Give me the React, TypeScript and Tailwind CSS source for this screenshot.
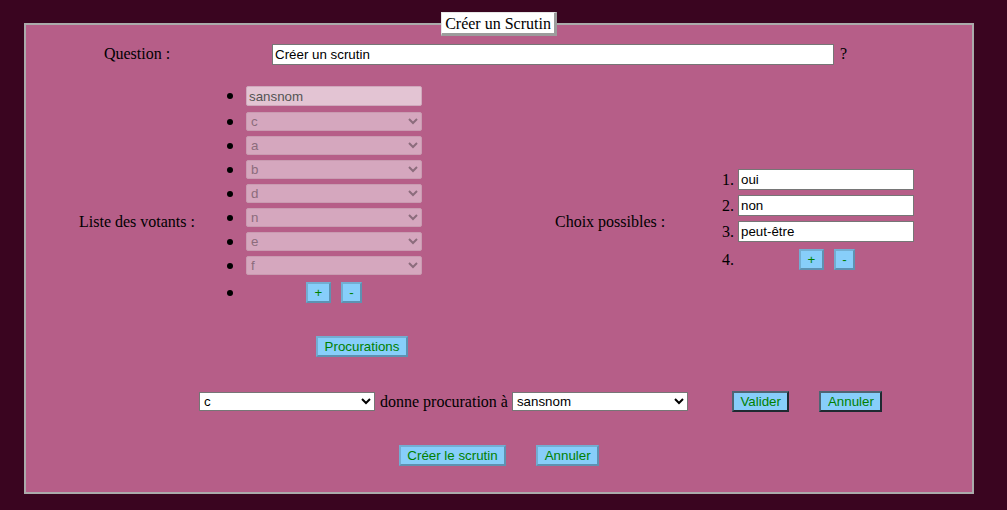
import React from 'react';

const btn =
  "h-[21px] px-[6.5px] py-0 border-2 bg-[#87cefa] text-[#008000] font-['Liberation_Sans',sans-serif] text-[13.33px] leading-[15px] border-t-[#72aed2] border-l-[#72aed2] border-r-[#5d92b2] border-b-[#5d92b2]";
const btnDark =
  "h-[21px] px-[6.5px] py-0 border-2 bg-[#87cefa] text-[#008000] font-['Liberation_Sans',sans-serif] text-[13.33px] leading-[15px] border-t-[#4d6573] border-l-[#4d6573] border-r-[#1e2a31] border-b-[#1e2a31]";

const field =
  "h-[21px] w-[176px] px-[2px] border border-[#767676] bg-white text-black font-['Liberation_Sans',sans-serif] text-[13.33px]";

const voters = ['c', 'a', 'b', 'd', 'n', 'e', 'f'];
const choices = ['oui', 'non', 'peut-être'];

function Dot() {
  return <span className="w-[6px] h-[6px] rounded-full bg-black shrink-0" />;
}

export default function App() {
  return (
    <div className="h-[510px] w-full bg-[#3a0520] pt-[12px] font-['Liberation_Serif',serif] text-[16px] text-black overflow-hidden">
      <fieldset className="ml-[24px] w-[950px] border-2 border-[#ababab] bg-[#b65e88] pb-[26px]">
        <legend className="mx-auto h-[24px] bg-white px-[3px] leading-[21px] border-t border-l border-t-[#e6e6e6] border-l-[#e6e6e6] border-r-[3px] border-b-[3px] border-r-[#9c9c9c] border-b-[#9c9c9c]">
          Créer un Scrutin
        </legend>

        {/* question */}
        <div className="mt-[6px] flex items-center">
          <div className="w-[222px] text-center">Question :</div>
          <input className="ml-[24px] h-[21px] w-[562px] px-[2px] border border-[#767676] bg-white text-black font-['Liberation_Sans',sans-serif] text-[13.33px]" defaultValue="Créer un scrutin" />
          <span className="ml-[6px]">?</span>
        </div>

        {/* votants et choix */}
        <div className="mt-[20px] flex items-center">
          <div className="w-[180px] pl-[53px] whitespace-nowrap">Liste des votants :</div>

          <div className="w-[312px] flex flex-col">
            <ul className="flex flex-col">
              <li className="flex items-center h-[20px] pl-[21px] gap-[13px]">
                <Dot />
                <input
                  disabled
                  defaultValue="sansnom"
                  className="h-[20px] w-[176px] px-[2px] rounded-[2px] border border-[#cfa9bc] bg-[#e3c4d3] text-[#545454] disabled:text-[#545454] font-['Liberation_Sans',sans-serif] text-[13.33px]"
                />
              </li>
              {voters.map((v, i) => (
                <li key={v} className={(i === 0 ? 'mt-[6px]' : 'mt-[5px]') + ' flex items-center h-[19px] pl-[21px] gap-[13px]'}>
                  <Dot />
                  <select
                    disabled
                    defaultValue={v}
                    className="h-[19px] w-[176px] rounded-[2px] border border-[#c99bb1] bg-[#d5a7be] text-[#8c6c7c] font-['Liberation_Sans',sans-serif] text-[13.33px]"
                  >
                    <option value={v}>{v}</option>
                  </select>
                </li>
              ))}
              <li className="mt-[7px] flex items-center h-[21px] pl-[21px]">
                <Dot />
                <button className={'ml-[73px] ' + btn}>+</button>
                <button className={'ml-[10px] ' + btn}>-</button>
              </li>
            </ul>
            <button className={'mt-[33px] self-center ' + btn}>Procurations</button>
          </div>

          <div className="w-[200px] pl-[37px] whitespace-nowrap">Choix possibles :</div>

          <ol className="flex flex-col pb-[4px]">
            {choices.map((c, i) => (
              <li key={c} className={(i === 0 ? '' : 'mt-[5px] ') + 'flex items-center h-[21px]'}>
                <span className="w-[16px] text-right">{i + 1}.</span>
                <input className={'ml-[4px] ' + field} defaultValue={c} />
              </li>
            ))}
            <li className="mt-[7px] flex items-center h-[21px]">
              <span className="w-[16px] text-right">4.</span>
              <button className={'ml-[65px] ' + btn}>+</button>
              <button className={'ml-[10px] ' + btn}>-</button>
            </li>
          </ol>
        </div>

        {/* procuration */}
        <div className="mt-[34px] flex items-center h-[21px]">
          <select defaultValue="c" className="ml-[173px] h-[19px] w-[176px] border border-[#767676] bg-white text-black font-['Liberation_Sans',sans-serif] text-[13.33px]">
            {voters.map((v) => (
              <option key={v} value={v}>{v}</option>
            ))}
          </select>
          <span className="ml-[5px]">donne procuration à</span>
          <select defaultValue="sansnom" className="ml-[4px] h-[19px] w-[176px] border border-[#767676] bg-white text-black font-['Liberation_Sans',sans-serif] text-[13.33px]">
            <option value="sansnom">sansnom</option>
            {voters.map((v) => (
              <option key={v} value={v}>{v}</option>
            ))}
          </select>
          <button className={'ml-[44px] ' + btnDark}>Valider</button>
          <button className={'ml-[30px] ' + btnDark}>Annuler</button>
        </div>

        {/* actions */}
        <div className="mt-[33px] flex justify-center gap-[30px]">
          <button className={btn}>Créer le scrutin</button>
          <button className={btn}>Annuler</button>
        </div>
      </fieldset>
    </div>
  );
}
